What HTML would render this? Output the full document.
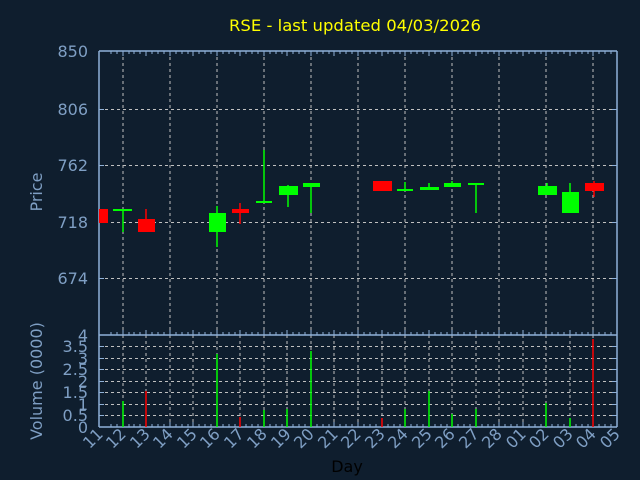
<!DOCTYPE html>
<html><head><meta charset="utf-8"><style>
html,body{margin:0;padding:0;background:#0f1e2e;}
svg{display:block;font-family:"DejaVu Sans","Liberation Sans",sans-serif;}
</style></head><body>
<svg width="640" height="480" viewBox="0 0 640 480" xmlns="http://www.w3.org/2000/svg">
<rect width="640" height="480" fill="#0f1e2e"/>
<text x="355" y="31" fill="#ffff00" font-size="16" text-anchor="middle" textLength="252" lengthAdjust="spacingAndGlyphs">RSE - last updated 04/03/2026</text>
<g stroke="#c0c0c0" stroke-width="1" stroke-dasharray="3,3" fill="none">
<line x1="99" y1="109.5" x2="617" y2="109.5"/>
<line x1="99" y1="165.5" x2="617" y2="165.5"/>
<line x1="99" y1="222.5" x2="617" y2="222.5"/>
<line x1="99" y1="278.5" x2="617" y2="278.5"/>
<line x1="123" y1="51" x2="123" y2="335"/><line x1="170" y1="51" x2="170" y2="335"/>
<line x1="217" y1="51" x2="217" y2="335"/><line x1="264" y1="51" x2="264" y2="335"/>
<line x1="311" y1="51" x2="311" y2="335"/><line x1="358" y1="51" x2="358" y2="335"/>
<line x1="405" y1="51" x2="405" y2="335"/><line x1="452" y1="51" x2="452" y2="335"/>
<line x1="499" y1="51" x2="499" y2="335"/><line x1="546" y1="51" x2="546" y2="335"/>
<line x1="593" y1="51" x2="593" y2="335"/>
<line x1="99" y1="346.5" x2="617" y2="346.5"/><line x1="99" y1="358.5" x2="617" y2="358.5"/>
<line x1="99" y1="369.5" x2="617" y2="369.5"/><line x1="99" y1="381.5" x2="617" y2="381.5"/>
<line x1="99" y1="392.5" x2="617" y2="392.5"/><line x1="99" y1="404.5" x2="617" y2="404.5"/>
<line x1="99" y1="415.5" x2="617" y2="415.5"/>
<line x1="123" y1="335" x2="123" y2="427"/><line x1="146" y1="335" x2="146" y2="427"/>
<line x1="170" y1="335" x2="170" y2="427"/><line x1="193" y1="335" x2="193" y2="427"/>
<line x1="217" y1="335" x2="217" y2="427"/><line x1="240" y1="335" x2="240" y2="427"/>
<line x1="264" y1="335" x2="264" y2="427"/><line x1="287" y1="335" x2="287" y2="427"/>
<line x1="311" y1="335" x2="311" y2="427"/><line x1="334" y1="335" x2="334" y2="427"/>
<line x1="358" y1="335" x2="358" y2="427"/><line x1="382" y1="335" x2="382" y2="427"/>
<line x1="405" y1="335" x2="405" y2="427"/><line x1="429" y1="335" x2="429" y2="427"/>
<line x1="452" y1="335" x2="452" y2="427"/><line x1="476" y1="335" x2="476" y2="427"/>
<line x1="499" y1="335" x2="499" y2="427"/><line x1="523" y1="335" x2="523" y2="427"/>
<line x1="546" y1="335" x2="546" y2="427"/><line x1="570" y1="335" x2="570" y2="427"/>
<line x1="593" y1="335" x2="593" y2="427"/>
</g>
<g stroke="#8fb0d8" stroke-width="1.5" fill="none">
<line x1="99" y1="51" x2="617" y2="51"/>
<line x1="99" y1="51" x2="99" y2="427"/>
<line x1="617" y1="51" x2="617" y2="427"/>
<line x1="99" y1="335" x2="617" y2="335"/>
<line x1="99" y1="427" x2="617" y2="427"/>
</g>
<g stroke="#8fb0d8" stroke-width="1" fill="none">
<path d="M99 109.5h5M99 165.5h5M99 222.5h5M99 278.5h5M617 109.5h-5M617 165.5h-5M617 222.5h-5M617 278.5h-5
M99 346.5h5M99 358.5h5M99 369.5h5M99 381.5h5M99 392.5h5M99 404.5h5M99 415.5h5
M617 346.5h-5M617 358.5h-5M617 369.5h-5M617 381.5h-5M617 392.5h-5M617 404.5h-5M617 415.5h-5"/>
<path d="M111 427v-3M117 427v-3M123 427v-5M129 427v-3M134 427v-3M140 427v-3M146 427v-5M152 427v-3M158 427v-3M164 427v-3M170 427v-5M176 427v-3M182 427v-3M188 427v-3M193 427v-5M199 427v-3M205 427v-3M211 427v-3M217 427v-5M223 427v-3M229 427v-3M235 427v-3M240 427v-5M246 427v-3M252 427v-3M258 427v-3M264 427v-5M270 427v-3M276 427v-3M282 427v-3M287 427v-5M293 427v-3M299 427v-3M305 427v-3M311 427v-5M317 427v-3M323 427v-3M329 427v-3M334 427v-5M340 427v-3M346 427v-3M352 427v-3M358 427v-5M364 427v-3M370 427v-3M376 427v-3M382 427v-5M388 427v-3M394 427v-3M400 427v-3M405 427v-5M411 427v-3M417 427v-3M423 427v-3M429 427v-5M435 427v-3M441 427v-3M447 427v-3M452 427v-5M458 427v-3M464 427v-3M470 427v-3M476 427v-5M482 427v-3M488 427v-3M494 427v-3M499 427v-5M505 427v-3M511 427v-3M517 427v-3M523 427v-5M529 427v-3M535 427v-3M541 427v-3M546 427v-5M552 427v-3M558 427v-3M564 427v-3M570 427v-5M576 427v-3M582 427v-3M588 427v-3M593 427v-5M599 427v-3M605 427v-3M611 427v-3"/>
<path d="M111 335v-3M117 335v-3M123 335v-5M129 335v-3M134 335v-3M140 335v-3M146 335v-5M152 335v-3M158 335v-3M164 335v-3M170 335v-5M176 335v-3M182 335v-3M188 335v-3M193 335v-5M199 335v-3M205 335v-3M211 335v-3M217 335v-5M223 335v-3M229 335v-3M235 335v-3M240 335v-5M246 335v-3M252 335v-3M258 335v-3M264 335v-5M270 335v-3M276 335v-3M282 335v-3M287 335v-5M293 335v-3M299 335v-3M305 335v-3M311 335v-5M317 335v-3M323 335v-3M329 335v-3M334 335v-5M340 335v-3M346 335v-3M352 335v-3M358 335v-5M364 335v-3M370 335v-3M376 335v-3M382 335v-5M388 335v-3M394 335v-3M400 335v-3M405 335v-5M411 335v-3M417 335v-3M423 335v-3M429 335v-5M435 335v-3M441 335v-3M447 335v-3M452 335v-5M458 335v-3M464 335v-3M470 335v-3M476 335v-5M482 335v-3M488 335v-3M494 335v-3M499 335v-5M505 335v-3M511 335v-3M517 335v-3M523 335v-5M529 335v-3M535 335v-3M541 335v-3M546 335v-5M552 335v-3M558 335v-3M564 335v-3M570 335v-5M576 335v-3M582 335v-3M588 335v-3M593 335v-5M599 335v-3M605 335v-3M611 335v-3"/>
<path d="M111 51v3M117 51v3M123 51v5M129 51v3M134 51v3M140 51v3M146 51v5M152 51v3M158 51v3M164 51v3M170 51v5M176 51v3M182 51v3M188 51v3M193 51v5M199 51v3M205 51v3M211 51v3M217 51v5M223 51v3M229 51v3M235 51v3M240 51v5M246 51v3M252 51v3M258 51v3M264 51v5M270 51v3M276 51v3M282 51v3M287 51v5M293 51v3M299 51v3M305 51v3M311 51v5M317 51v3M323 51v3M329 51v3M334 51v5M340 51v3M346 51v3M352 51v3M358 51v5M364 51v3M370 51v3M376 51v3M382 51v5M388 51v3M394 51v3M400 51v3M405 51v5M411 51v3M417 51v3M423 51v3M429 51v5M435 51v3M441 51v3M447 51v3M452 51v5M458 51v3M464 51v3M470 51v3M476 51v5M482 51v3M488 51v3M494 51v3M499 51v5M505 51v3M511 51v3M517 51v3M523 51v5M529 51v3M535 51v3M541 51v3M546 51v5M552 51v3M558 51v3M564 51v3M570 51v5M576 51v3M582 51v3M588 51v3M593 51v5M599 51v3M605 51v3M611 51v3"/>
</g>
<g fill="#ff0000" stroke="#ff0000" stroke-width="1.5">
<rect x="99" y="209" width="9" height="14" stroke="none"/>
<line x1="146" y1="209" x2="146" y2="232"/><rect x="138" y="219" width="17" height="13" stroke="none"/>
<line x1="240" y1="203" x2="240" y2="224"/><rect x="232" y="209" width="17" height="4" stroke="none"/>
<rect x="373" y="181" width="19" height="10" stroke="none"/>
<line x1="594" y1="181" x2="594" y2="197"/><rect x="585" y="183" width="19" height="8" stroke="none"/>
</g>
<g fill="#00ff00" stroke="#00ff00" stroke-width="1.5">
<line x1="123" y1="209" x2="123" y2="232"/><rect x="113" y="209" width="19" height="2" stroke="none"/>
<line x1="217" y1="206" x2="217" y2="247"/><rect x="209" y="213" width="17" height="19" stroke="none"/>
<line x1="264" y1="150" x2="264" y2="203"/><rect x="256" y="201" width="16" height="2" stroke="none"/>
<line x1="288" y1="185" x2="288" y2="207"/><rect x="279" y="186" width="19" height="9" stroke="none"/>
<line x1="311" y1="183" x2="311" y2="213"/><rect x="303" y="183" width="17" height="4" stroke="none"/>
<line x1="405" y1="182" x2="405" y2="190"/><rect x="397" y="189" width="16" height="2" stroke="none"/>
<line x1="429" y1="183" x2="429" y2="188"/><rect x="420" y="187" width="19" height="3" stroke="none"/>
<line x1="452" y1="181" x2="452" y2="186"/><rect x="444" y="183" width="17" height="4" stroke="none"/>
<line x1="476" y1="183" x2="476" y2="213"/><rect x="468" y="183" width="16" height="2" stroke="none"/>
<line x1="547" y1="183" x2="547" y2="190"/><rect x="538" y="186" width="19" height="9" stroke="none"/>
<line x1="570" y1="183" x2="570" y2="193"/><rect x="562" y="192" width="17" height="21" stroke="none"/>
</g>
<g stroke-width="1.5">
<line x1="123" y1="401" x2="123" y2="427" stroke="#00ff00"/>
<line x1="146" y1="391" x2="146" y2="427" stroke="#ff0000"/>
<line x1="217" y1="354" x2="217" y2="427" stroke="#00ff00"/>
<line x1="240" y1="417" x2="240" y2="427" stroke="#ff0000"/>
<line x1="264" y1="410" x2="264" y2="427" stroke="#00ff00"/>
<line x1="287" y1="409" x2="287" y2="427" stroke="#00ff00"/>
<line x1="311" y1="351" x2="311" y2="427" stroke="#00ff00"/>
<line x1="382" y1="418" x2="382" y2="427" stroke="#ff0000"/>
<line x1="405" y1="409" x2="405" y2="427" stroke="#00ff00"/>
<line x1="429" y1="391" x2="429" y2="427" stroke="#00ff00"/>
<line x1="452" y1="414" x2="452" y2="427" stroke="#00ff00"/>
<line x1="476" y1="409" x2="476" y2="427" stroke="#00ff00"/>
<line x1="546" y1="403" x2="546" y2="427" stroke="#00ff00"/>
<line x1="570" y1="418" x2="570" y2="427" stroke="#00ff00"/>
<line x1="593" y1="339" x2="593" y2="427" stroke="#ff0000"/>
</g>
<g fill="#7f9fc4" font-size="16" text-anchor="end">
<text x="88" y="57">850</text><text x="88" y="115">806</text>
<text x="88" y="171">762</text><text x="88" y="228">718</text>
<text x="88" y="284">674</text>
<text x="88" y="341">4</text><text x="88" y="352">3.5</text>
<text x="88" y="364">3</text><text x="88" y="375">2.5</text>
<text x="88" y="387">2</text><text x="88" y="398">1.5</text>
<text x="88" y="410">1</text><text x="88" y="421">0.5</text>
<text x="88" y="433">0</text>
</g>
<text transform="translate(42,192) rotate(-90)" fill="#7f9fc4" font-size="16" text-anchor="middle">Price</text>
<text transform="translate(42,381) rotate(-90)" fill="#7f9fc4" font-size="16" text-anchor="middle">Volume (0000)</text>
<g fill="#7f9fc4" font-size="16" text-anchor="end">
<text transform="translate(104,435) rotate(-45)">11</text>
<text transform="translate(127,435) rotate(-45)">12</text>
<text transform="translate(151,435) rotate(-45)">13</text>
<text transform="translate(174,435) rotate(-45)">14</text>
<text transform="translate(198,435) rotate(-45)">15</text>
<text transform="translate(221,435) rotate(-45)">16</text>
<text transform="translate(245,435) rotate(-45)">17</text>
<text transform="translate(268,435) rotate(-45)">18</text>
<text transform="translate(292,435) rotate(-45)">19</text>
<text transform="translate(315,435) rotate(-45)">20</text>
<text transform="translate(339,435) rotate(-45)">21</text>
<text transform="translate(362,435) rotate(-45)">22</text>
<text transform="translate(386,435) rotate(-45)">23</text>
<text transform="translate(409,435) rotate(-45)">24</text>
<text transform="translate(433,435) rotate(-45)">25</text>
<text transform="translate(456,435) rotate(-45)">26</text>
<text transform="translate(480,435) rotate(-45)">27</text>
<text transform="translate(503,435) rotate(-45)">28</text>
<text transform="translate(527,435) rotate(-45)">01</text>
<text transform="translate(550,435) rotate(-45)">02</text>
<text transform="translate(574,435) rotate(-45)">03</text>
<text transform="translate(597,435) rotate(-45)">04</text>
<text transform="translate(621,435) rotate(-45)">05</text>
</g>
<text x="347" y="472" fill="#000000" font-size="16" text-anchor="middle">Day</text>
</svg>
</body></html>
